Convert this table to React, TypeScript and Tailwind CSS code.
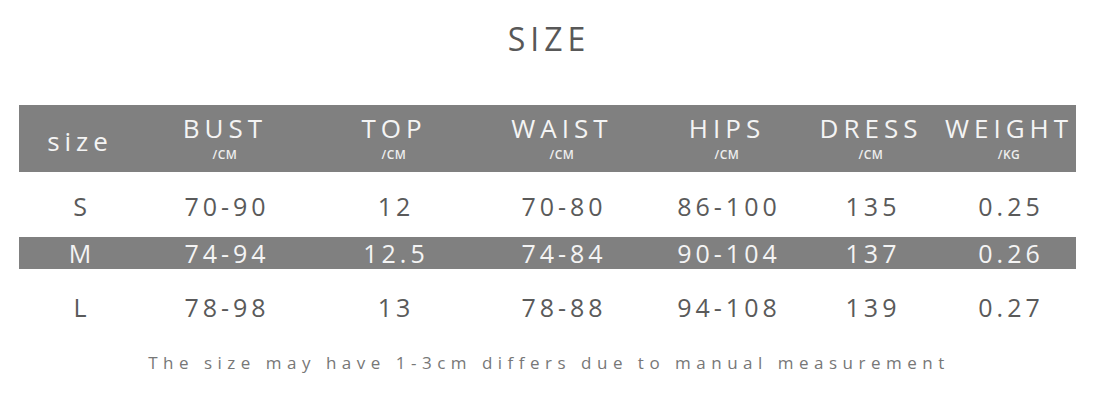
import React from "react";

const cols = "grid grid-cols-[122px_168px_170px_166px_164px_124px_143px]";

const headers: { t: string; u?: string }[] = [
  { t: "size" },
  { t: "BUST", u: "/CM" },
  { t: "TOP", u: "/CM" },
  { t: "WAIST", u: "/CM" },
  { t: "HIPS", u: "/CM" },
  { t: "DRESS", u: "/CM" },
  { t: "WEIGHT", u: "/KG" },
];

const rows = [
  ["S", "70-90", "12", "70-80", "86-100", "135", "0.25"],
  ["M", "74-94", "12.5", "74-84", "90-104", "137", "0.26"],
  ["L", "78-98", "13", "78-88", "94-108", "139", "0.27"],
];

export default function App() {
  return (
    <div className="w-[1096px] h-[401px] bg-white overflow-hidden font-['Open_Sans',sans-serif]">
      <div className="pt-[19px] flex justify-center">
        <h1 className="text-[32px] leading-[40px] tracking-[5px] text-[#585858] font-normal pl-[2px]">SIZE</h1>
      </div>
      <div className="ml-[19px] w-[1057px] mt-[46px]">
        <div className={`${cols} h-[67px] bg-[#808080] text-[#f4f4f4]`}>
          {headers.map((h, i) => (
            <div
              key={i}
              className={`flex flex-col items-center ${h.u ? "justify-start pt-[7px]" : "justify-center"} ${i === 6 ? "pl-[9px]" : ""}`}
            >
              <span className={`text-[26px] leading-[32px] tracking-[5px] whitespace-nowrap ${h.u ? "" : "pt-[4px]"}`}>
                {h.t}
              </span>
              {h.u && (
                <span className="text-[12px] leading-[16px] font-semibold mt-[3px] tracking-[0.5px] text-[#eeeeee]">{h.u}</span>
              )}
            </div>
          ))}
        </div>
        {rows.map((r, ri) => (
          <div
            key={ri}
            className={`${cols} items-center ${
              ri === 1
                ? "h-[32px] bg-[#808080] text-[#f4f4f4]"
                : ri === 0
                ? "h-[65px] text-[#5a5a5a] pt-[2px]"
                : "h-[76px] text-[#5a5a5a]"
            }`}
          >
            {r.map((v, ci) => (
              <div
                key={ci}
                className={`text-center text-[25px] leading-[32px] whitespace-nowrap ${
                  ci === 0 ? "tracking-normal" : "tracking-[4px] pl-[4px]"
                } ${ci === 6 ? "pl-[13px]" : ""}`}
              >
                {v}
              </div>
            ))}
          </div>
        ))}
      </div>
      <div className="flex justify-center pl-[2px] pt-[6px]">
        <p className="text-[17px] leading-[24px] tracking-[5.5px] text-[#777777]">
          The size may have 1-3cm differs due to manual measurement
        </p>
      </div>
    </div>
  );
}
